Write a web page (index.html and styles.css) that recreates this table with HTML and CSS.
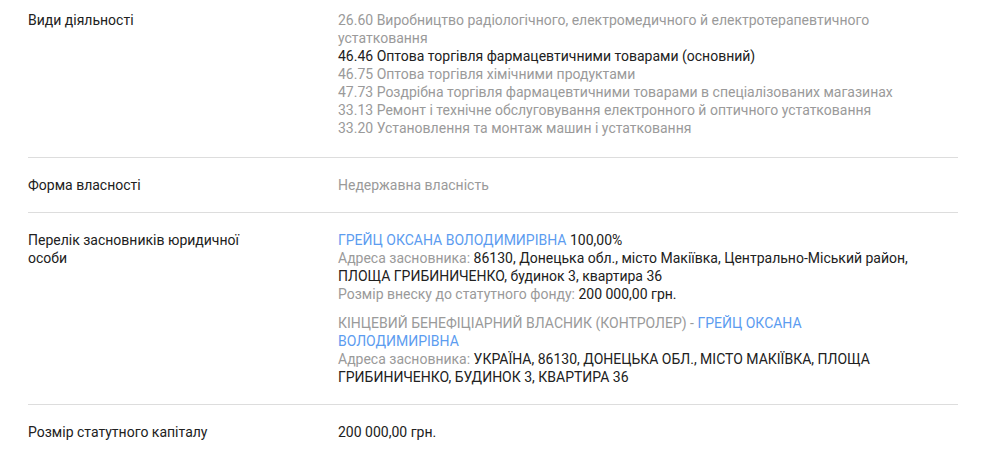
FILE: index.html
```html
<!DOCTYPE html>
<html lang="uk">
<head>
<meta charset="utf-8">
<link rel="stylesheet" href="styles.css">
</head>
<body>
<div class="table">
  <div class="row first">
    <div class="label">Види діяльності</div>
    <div class="value">
      <div class="muted">26.60 Виробництво радіологічного, електромедичного й електротерапевтичного устатковання</div>
      <div class="main">46.46 Оптова торгівля фармацевтичними товарами (основний)</div>
      <div class="muted">46.75 Оптова торгівля хімічними продуктами</div>
      <div class="muted">47.73 Роздрібна торгівля фармацевтичними товарами в спеціалізованих магазинах</div>
      <div class="muted">33.13 Ремонт і технічне обслуговування електронного й оптичного устатковання</div>
      <div class="muted">33.20 Установлення та монтаж машин і устатковання</div>
    </div>
  </div>
  <div class="row">
    <div class="label">Форма власності</div>
    <div class="value muted">Недержавна власність</div>
  </div>
  <div class="row">
    <div class="label">Перелік засновників юридичної особи</div>
    <div class="value">
      <div class="block">
        <div><span class="link">ГРЕЙЦ ОКСАНА ВОЛОДИМИРІВНА</span> 100,00%</div>
        <div><span class="muted">Адреса засновника:</span> 86130, Донецька обл., місто Макіївка, Центрально-Міський район, ПЛОЩА ГРИБИНИЧЕНКО, будинок 3, квартира 36</div>
        <div><span class="muted">Розмір внеску до статутного фонду:</span> 200 000,00 грн.</div>
      </div>
      <div class="block">
        <div><span class="muted">КІНЦЕВИЙ БЕНЕФІЦІАРНИЙ ВЛАСНИК (КОНТРОЛЕР) - </span><span class="link">ГРЕЙЦ ОКСАНА ВОЛОДИМИРІВНА</span></div>
        <div><span class="muted">Адреса засновника:</span> УКРАЇНА, 86130, ДОНЕЦЬКА ОБЛ., МІСТО МАКІЇВКА, ПЛОЩА ГРИБИНИЧЕНКО, БУДИНОК 3, КВАРТИРА 36</div>
      </div>
    </div>
  </div>
  <div class="row">
    <div class="label">Розмір статутного капіталу</div>
    <div class="value">200 000,00 грн.</div>
  </div>
</div>
</body>
</html>
```

FILE: styles.css
```css
html, body {
  margin: 0;
  padding: 0;
  background: #ffffff;
}
body {
  font-family: Roboto, "Noto Sans", sans-serif;
  font-size: 14px;
  line-height: 18px;
  color: #212121;
}
.table {
  margin-left: 28px;
  width: 930px;
}
.row {
  display: grid;
  grid-template-columns: 310px 1fr;
  padding: 18px 0 18px;
  border-top: 1px solid #dddddd;
}
.row.first {
  border-top: none;
  padding: 11px 0 20px;
}
.label {
  max-width: 230px;
  color: #212121;
}
.value {
  max-width: 580px;
}
.muted {
  color: #9a9a9a;
}
.main {
  color: #212121;
}
.link {
  color: #5c9cf0;
}
.block + .block {
  margin-top: 11px;
}
```
